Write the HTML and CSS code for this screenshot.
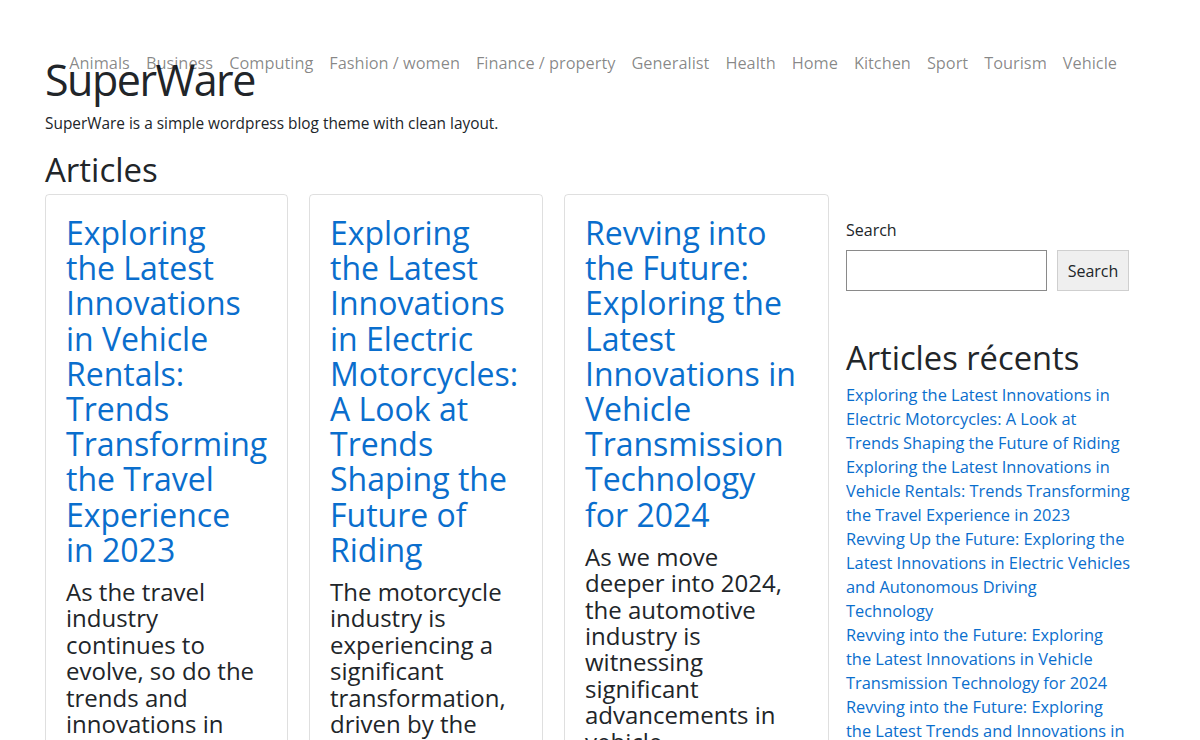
FILE: index.html
```html
<!DOCTYPE html>
<html lang="fr">
<head>
<meta charset="utf-8">
<title>SuperWare</title>
<link rel="stylesheet" href="styles.css">
</head>
<body>
<div class="page">
  <header class="site-header">
    <nav class="main-nav">
      <a href="#">Animals</a>
      <a href="#">Business</a>
      <a href="#">Computing</a>
      <a href="#">Fashion / women</a>
      <a href="#">Finance / property</a>
      <a href="#">Generalist</a>
      <a href="#">Health</a>
      <a href="#">Home</a>
      <a href="#">Kitchen</a>
      <a href="#">Sport</a>
      <a href="#">Tourism</a>
      <a href="#">Vehicle</a>
    </nav>
    <h1 class="site-title">SuperWare</h1>
    <p class="site-tagline">SuperWare is a simple wordpress blog theme with clean layout.</p>
  </header>
  <div class="layout">
    <main class="content">
      <h2 class="section-title">Articles</h2>
      <div class="cards">
        <article class="card card-a">
          <h3 class="card-title"><a href="#">Exploring<br>the Latest<br>Innovations<br>in Vehicle<br>Rentals:<br>Trends<br>Transforming<br>the Travel<br>Experience<br>in 2023</a></h3>
          <p class="card-text">As the travel<br>industry<br>continues to<br>evolve, so do the<br>trends and<br>innovations in<br>vehicle rentals.</p>
        </article>
        <article class="card card-b">
          <h3 class="card-title"><a href="#">Exploring<br>the Latest<br>Innovations<br>in Electric<br>Motorcycles:<br>A Look at<br>Trends<br>Shaping the<br>Future of<br>Riding</a></h3>
          <p class="card-text">The motorcycle<br>industry is<br>experiencing a<br>significant<br>transformation,<br>driven by the<br>rise of electric</p>
        </article>
        <article class="card card-c">
          <h3 class="card-title"><a href="#">Revving into<br>the Future:<br>Exploring the<br>Latest<br>Innovations in<br>Vehicle<br>Transmission<br>Technology<br>for 2024</a></h3>
          <p class="card-text">As we move<br>deeper into 2024,<br>the automotive<br>industry is<br>witnessing<br>significant<br>advancements in<br>vehicle</p>
        </article>
      </div>
    </main>
    <aside class="sidebar">
      <form class="search">
        <label class="search-label" for="s">Search</label>
        <div class="search-row">
          <input class="search-input" id="s" type="text">
          <button class="search-btn" type="button">Search</button>
        </div>
      </form>
      <h2 class="widget-title">Articles récents</h2>
      <ul class="recent">
        <li><a href="#">Exploring the Latest Innovations in<br>Electric Motorcycles: A Look at<br>Trends Shaping the Future of Riding</a></li>
        <li><a href="#">Exploring the Latest Innovations in<br>Vehicle Rentals: Trends Transforming<br>the Travel Experience in 2023</a></li>
        <li><a href="#">Revving Up the Future: Exploring the<br>Latest Innovations in Electric Vehicles<br>and Autonomous Driving<br>Technology</a></li>
        <li><a href="#">Revving into the Future: Exploring<br>the Latest Innovations in Vehicle<br>Transmission Technology for 2024</a></li>
        <li><a href="#">Revving into the Future: Exploring<br>the Latest Trends and Innovations in<br>Vehicle Technology</a></li>
      </ul>
    </aside>
  </div>
</div>
</body>
</html>
```

FILE: styles.css
```css
* { box-sizing: border-box; }
html, body { margin: 0; padding: 0; background: #fff; }
body {
  font-family: "Open Sans", "Noto Sans", "DejaVu Sans", sans-serif;
  font-size: 16px;
  line-height: 1.5;
  color: #212529;
  overflow: hidden;
}
a { color: #0a6ecd; text-decoration: none; }

.page {
  width: 1110px;
  margin: 0 auto;
  padding-top: 54px;
}

.site-header { position: relative; }
.main-nav {
  position: absolute;
  top: -3px;
  right: 30px;
  display: flex;
}
.main-nav a {
  color: rgba(0, 0, 0, 0.48);
  font-size: 16.35px;
  line-height: 24px;
  padding: 0 8px;
}
.site-title {
  margin: 0;
  font-size: 43px;
  font-weight: 400;
  letter-spacing: -1.5px;
  line-height: 52px;
  color: #212529;
}
.site-tagline {
  margin: 6px 0 0;
  font-size: 15.4px;
  line-height: 24px;
}

.layout {
  display: grid;
  grid-template-columns: 784px 286px;
  column-gap: 17px;
  align-items: start;
}
.section-title {
  margin: 15px 0 5px;
  font-size: 33px;
  font-weight: 400;
  line-height: 38px;
}
.cards {
  display: flex;
  gap: 21px;
  align-items: flex-start;
}
.card {
  border: 1px solid rgba(0, 0, 0, 0.125);
  border-radius: 4px;
  padding: 20px;
  flex: none;
  min-height: 700px;
  overflow: hidden;
}
.card-a { width: 243px; }
.card-b { width: 234px; }
.card-c { width: 265px; }
.card-title {
  margin: 0 0 12px;
  font-size: 32px;
  font-weight: 400;
  line-height: 35.2px;
  white-space: nowrap;
}
.card-text {
  margin: 0;
  font-size: 24px;
  line-height: 26.4px;
  white-space: nowrap;
}

.sidebar { padding-top: 82px; }
.search-label {
  display: block;
  font-size: 16px;
  line-height: 24px;
  margin-bottom: 8px;
}
.search-row { display: flex; gap: 10px; }
.search-input {
  width: 201px;
  height: 41px;
  border: 1px solid #8a8a8a;
  border-radius: 0;
  padding: 0 8px;
  font: inherit;
}
.search-btn {
  width: 72px;
  height: 41px;
  border: 1px solid #cfcfcf;
  background: #efefef;
  color: #212529;
  font: inherit;
  font-size: 16px;
  padding: 0;
}
.widget-title {
  margin: 48px 0 6px;
  font-size: 32.7px;
  font-weight: 400;
  line-height: 38px;
}
.recent { list-style: none; margin: 0; padding: 0; }
.recent li { font-size: 16.4px; line-height: 24px; white-space: nowrap; }
```
